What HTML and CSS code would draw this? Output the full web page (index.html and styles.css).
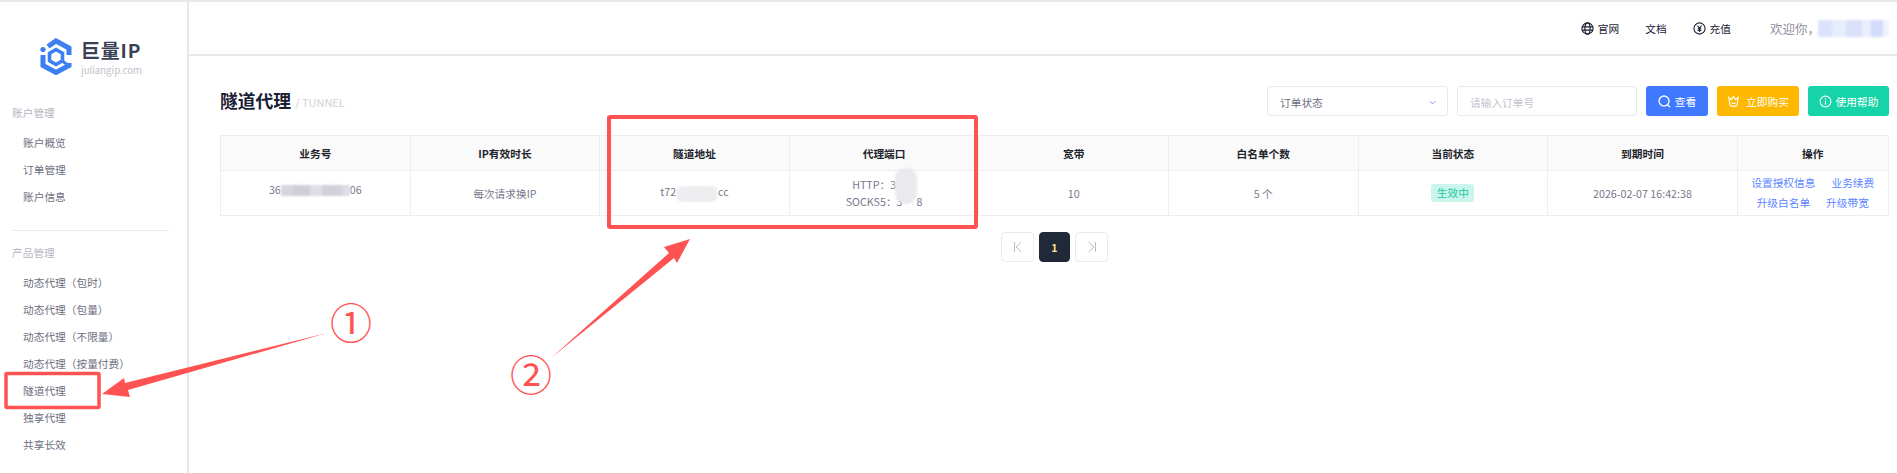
FILE: index.html
```html
<!DOCTYPE html>
<html lang="zh-CN">
<head>
    <meta charset="UTF-8">
    <meta name="viewport" content="width=device-width, initial-scale=1.0">
    <title>隧道代理</title>
    <link rel="stylesheet" href="styles.css">
</head>
<body>
    <div class="layout">
        <aside class="sidebar">
            <div class="logo">
                <svg class="logo-icon" viewBox="0 0 32 37" fill="none" stroke="#3b7ff0" stroke-width="5">
                    <path d="M8 8.5 L16 3 L29 10 V17"/>
                    <path d="M29 25 V27.5 L16 34.5 L3 27.5 V17"/>
                    <circle cx="3" cy="11.5" r="2.6" fill="#3b7ff0" stroke="none"/>
                    <path d="M16 11.5 L22.5 15.2 V22.8 L16 26.5 L9.5 22.8 V15.2 Z" stroke-width="3.6"/>
                    <path d="M22 23 L28 27" stroke-width="3"/>
                </svg>
                <div class="logo-text">
                    <div class="logo-name">巨量IP</div>
                    <div class="logo-site">juliangip.com</div>
                </div>
            </div>
            <div class="nav-label">账户管理</div>
            <ul class="nav">
                <li>账户概览</li>
                <li>订单管理</li>
                <li>账户信息</li>
            </ul>
            <div class="nav-divider"></div>
            <div class="nav-label">产品管理</div>
            <ul class="nav">
                <li>动态代理（包时）</li>
                <li>动态代理（包量）</li>
                <li>动态代理（不限量）</li>
                <li>动态代理（按量付费）</li>
                <li>隧道代理</li>
                <li>独享代理</li>
                <li>共享长效</li>
            </ul>
        </aside>

        <div class="main">
            <header class="topbar">
                <span class="top-link">
                    <svg class="top-icon" viewBox="0 0 14 14" fill="none" stroke="#1c2233" stroke-width="1.2">
                        <circle cx="7" cy="7" r="6"/>
                        <ellipse cx="7" cy="7" rx="2.8" ry="6"/>
                        <path d="M1 5.2 H13 M1 8.8 H13"/>
                    </svg>
                    官网
                </span>
                <span class="top-link">文档</span>
                <span class="top-link">
                    <svg class="top-icon" viewBox="0 0 14 14" fill="none" stroke="#1c2233" stroke-width="1.2">
                        <circle cx="7" cy="7" r="6"/>
                        <path d="M4.8 3.8 L7 6.8 L9.2 3.8 M7 6.8 V10.8 M5 7.2 H9 M5 9 H9"/>
                    </svg>
                    充值
                </span>
                <span class="welcome">欢迎你，<span class="mosaic mosaic-user"></span></span>
            </header>

            <div class="content">
                <div class="toolbar">
                    <div class="page-title">
                        <h1>隧道代理</h1>
                        <span class="page-sub">/ TUNNEL</span>
                    </div>
                    <div class="filters">
                        <div class="select">
                            <span>订单状态</span>
                            <svg class="chevron" viewBox="0 0 8 5" fill="none" stroke="#6f8fe0" stroke-width="1.1">
                                <path d="M1 1 L4 4 L7 1"/>
                            </svg>
                        </div>
                        <div class="input">请输入订单号</div>
                        <button class="btn btn-blue">
                            <svg class="btn-icon" viewBox="0 0 14 14" fill="none" stroke="#fff" stroke-width="1.4">
                                <circle cx="6.5" cy="6.5" r="5.4"/>
                                <path d="M10.2 10.4 L12.8 13"/>
                            </svg>
                            查看
                        </button>
                        <button class="btn btn-amber btn-buy">
                            <svg class="btn-icon" viewBox="0 0 14 14" fill="none" stroke="#fff" stroke-width="1.2">
                                <path d="M2 2.5 L4.8 5 L7 1.5 L9.2 5 L12 2.5 L10.8 11 Q7 13.5 3.2 11 Z"/>
                                <path d="M5 8.3 Q7 10 9 8.3"/>
                            </svg>
                            立即购买
                        </button>
                        <button class="btn btn-green">
                            <svg class="btn-icon" viewBox="0 0 14 14" fill="none" stroke="#fff" stroke-width="1.2">
                                <circle cx="7" cy="7" r="5.8"/>
                                <path d="M7 6 V10.4 M7 3.6 V4.8"/>
                            </svg>
                            使用帮助
                        </button>
                    </div>
                </div>

                <table class="data-table">
                    <colgroup>
                        <col class="col-wide"><col class="col-wide"><col class="col-wide">
                        <col class="col-wide"><col class="col-wide"><col class="col-wide">
                        <col class="col-wide"><col class="col-wide"><col class="col-ops">
                    </colgroup>
                    <thead>
                        <tr>
                            <th>业务号</th>
                            <th>IP有效时长</th>
                            <th>隧道地址</th>
                            <th>代理端口</th>
                            <th>宽带</th>
                            <th>白名单个数</th>
                            <th>当前状态</th>
                            <th>到期时间</th>
                            <th>操作</th>
                        </tr>
                    </thead>
                    <tbody>
                        <tr>
                            <td class="cell-raised">36<span class="mosaic mosaic-id"></span>06</td>
                            <td>每次请求换IP</td>
                            <td>t72<span class="mosaic mosaic-host"></span>cc</td>
                            <td>
                                <div class="ports">
                                    <div>HTTP：3<span class="port-gap"></span>3</div>
                                    <div>SOCKS5：3<span class="port-gap"></span>8</div>
                                    <span class="port-blur"></span>
                                </div>
                            </td>
                            <td>10</td>
                            <td>5 个</td>
                            <td><span class="badge">生效中</span></td>
                            <td>2026-02-07 16:42:38</td>
                            <td class="ops">
                                <div><a>设置授权信息</a><a>业务续费</a></div>
                                <div><a>升级白名单</a><a>升级带宽</a></div>
                            </td>
                        </tr>
                    </tbody>
                </table>

                <div class="pager">
                    <span class="page-btn">
                        <svg viewBox="0 0 10 12" fill="none" stroke="#b9bcc4" stroke-width="1"><path d="M1.5 1 V11 M8.5 1 L3 6 L8.5 11"/></svg>
                    </span>
                    <span class="page-btn page-current">1</span>
                    <span class="page-btn">
                        <svg viewBox="0 0 10 12" fill="none" stroke="#b9bcc4" stroke-width="1"><path d="M8.5 1 V11 M1.5 1 L7 6 L1.5 11"/></svg>
                    </span>
                </div>
            </div>
        </div>
    </div>

    <!-- red annotations drawn on top of the screenshot -->
    <svg class="marks" viewBox="0 0 1897 473" fill="none">
        <rect x="6" y="373.5" width="93" height="34" rx="1" stroke="#ff5353" stroke-width="3.5"/>
        <rect x="609" y="117" width="367" height="110" rx="1" stroke="#ff5353" stroke-width="4"/>
        <polygon points="327,333 125,383 124,378 102,394 130,397 128,390" fill="#ff5353"/>
        <polygon points="551,358 669,253 664,247 690,239 677,263 674,258" fill="#ff5353"/>
        <text class="mark-num" x="351" y="339">①</text>
        <text class="mark-num" x="531" y="391">②</text>
    </svg>
</body>
</html>
```

FILE: styles.css
```css
html, body {
    margin: 0;
    height: 473px;
    overflow: hidden;
}
body {
    position: relative;
    font-family: "Noto Sans CJK SC", "Noto Sans", sans-serif;
    font-size: 10.7px;
    color: #77778a;
    background-color: #fff;
    border-top: 2px solid #e8e8ec;
    box-sizing: border-box;
}
.layout {
    display: flex;
    height: 471px;
}

/* sidebar */
.sidebar {
    width: 187px;
    flex-shrink: 0;
    border-right: 2px solid #e6e8f0;
}
.logo {
    display: flex;
    gap: 9px;
    height: 61px;
    padding: 36px 0 0 40px;
}
.logo-icon {
    width: 32px;
    height: 37px;
}
.logo-name {
    font-size: 19px;
    font-weight: 700;
    line-height: 24px;
    letter-spacing: 0.8px;
    color: #3a4157;
}
.logo-site {
    font-size: 9.6px;
    line-height: 13px;
    margin-top: 2px;
    color: #c0c1ca;
}
.nav-label {
    line-height: 27px;
    padding-left: 12px;
    color: #b5b5c0;
}
.nav {
    list-style: none;
    margin: 3px 0 0;
    padding: 0;
}
.nav li {
    line-height: 27px;
    padding-left: 23px;
    color: #6d6d7e;
    white-space: nowrap;
}
.nav-divider {
    height: 1px;
    margin: 20px 18px 8px 12px;
    background-color: #e6e8f0;
}

/* top bar */
.main {
    flex: 1;
    min-width: 0;
}
.topbar {
    display: flex;
    justify-content: flex-end;
    align-items: center;
    height: 52px;
    padding-right: 6px;
    border-bottom: 2px solid #e8e8ec;
}
.top-link {
    display: flex;
    align-items: center;
    gap: 4px;
    margin-right: 26px;
    color: #1c2233;
}
.top-icon {
    width: 13px;
    height: 13px;
}
.welcome {
    display: flex;
    align-items: center;
    width: 121px;
    margin-left: 13px;
    font-size: 12.5px;
    color: #8f8f9e;
}

/* mosaics hide private values, as in the original screenshot */
.mosaic {
    display: inline-block;
    vertical-align: middle;
    filter: blur(1px);
}
.mosaic-user {
    width: 71px;
    height: 17px;
    margin-left: -2px;
    border-radius: 2px;
    background: linear-gradient(90deg, #dbe3fb 0 20%, #e8edfc 20% 40%, #d9e1fa 40% 62%, #eaeefd 62% 75%, #d3dcfa 75% 92%, #f0f3fe 92%);
}
.mosaic-id {
    width: 69px;
    height: 11px;
    background: linear-gradient(90deg, #d6d5dd 0 18%, #cfcdd6 18% 42%, #dfdee5 42% 60%, #d2d0d9 60% 88%, #dddce3 88%);
}
.mosaic-host {
    width: 42px;
    height: 16px;
    border-radius: 7px;
    background-color: #eeeef1;
}

/* content */
.content {
    padding: 30px 8px 0 31px;
}
.toolbar {
    display: flex;
    justify-content: space-between;
    align-items: center;
    height: 30px;
}
.page-title {
    display: flex;
    align-items: center;
    gap: 4px;
    margin-bottom: 3px;
}
.page-title h1 {
    margin: 0;
    font-size: 17.8px;
    font-weight: 700;
    color: #1a2033;
}
.page-sub {
    margin-top: 4px;
    font-size: 11px;
    color: #cfcfd6;
}
.filters {
    display: flex;
    gap: 9px;
}
.select, .input {
    box-sizing: border-box;
    display: flex;
    align-items: center;
    height: 30px;
    padding-top: 2px;
    border: 1px solid #e6e8f0;
    border-radius: 3px;
}
.select {
    justify-content: space-between;
    width: 181px;
    padding-left: 12px;
    padding-right: 11px;
    color: #6d6d7e;
}
.chevron {
    width: 7px;
    height: 5px;
}
.input {
    width: 180px;
    padding-left: 12px;
    color: #c2c3cd;
}
.btn {
    display: flex;
    align-items: center;
    justify-content: center;
    gap: 4px;
    height: 30px;
    padding: 0;
    border: 0;
    border-radius: 3px;
    font: inherit;
    color: #fff;
}
.btn-icon {
    width: 13px;
    height: 13px;
}
.btn-blue {
    width: 62px;
    background-color: #4079ff;
}
.btn-amber {
    width: 82px;
    background-color: #ffb800;
}
.btn-buy {
    gap: 6px;
}
.btn-green {
    width: 81px;
    background-color: #16d3a9;
}

/* table */
.data-table {
    table-layout: fixed;
    width: 1668px;
    margin-top: 19px;
    border-collapse: collapse;
    text-align: center;
}
.col-wide {
    width: 189.6px;
}
.col-ops {
    width: 151px;
}
.data-table th, .data-table td {
    padding: 0;
    border: 1px solid #eeeeef;
}
.data-table th {
    height: 34px;
    font-weight: 700;
    color: #22242c;
    background-color: #fafafa;
}
.data-table td {
    height: 44px;
}
.data-table td.cell-raised {
    height: 36px;
    padding-bottom: 8px;
}
.ports {
    position: relative;
    line-height: 17px;
}
.port-gap {
    display: inline-block;
    width: 14px;
}
.port-blur {
    position: absolute;
    top: -8px;
    left: 105px;
    width: 22px;
    height: 36px;
    border-radius: 11px;
    background-color: #e9e9ee;
    filter: blur(1px);
}
.badge {
    display: inline-block;
    width: 43px;
    height: 18px;
    line-height: 18px;
    border-radius: 3px;
    color: #14cba2;
    background-color: #cbf5ec;
}
.ops {
    line-height: 20px;
}
.ops a {
    margin: 0 8px;
    color: #5b85ff;
}

/* pager */
.pager {
    display: flex;
    justify-content: center;
    gap: 5px;
    margin-top: 16px;
}
.page-btn {
    box-sizing: border-box;
    display: flex;
    align-items: center;
    justify-content: center;
    width: 33px;
    height: 30px;
    border: 1px solid #ebebee;
    border-radius: 4px;
}
.page-btn svg {
    width: 10px;
    height: 12px;
}
.page-current {
    width: 31px;
    border-color: #1f2937;
    font-weight: 700;
    color: #ffe28a;
    background-color: #1f2937;
}

/* annotations */
.marks {
    position: absolute;
    top: -2px;
    left: 0;
    width: 1897px;
    height: 473px;
}
.mark-num {
    font-size: 42px;
    text-anchor: middle;
    fill: #ff5353;
}
```
